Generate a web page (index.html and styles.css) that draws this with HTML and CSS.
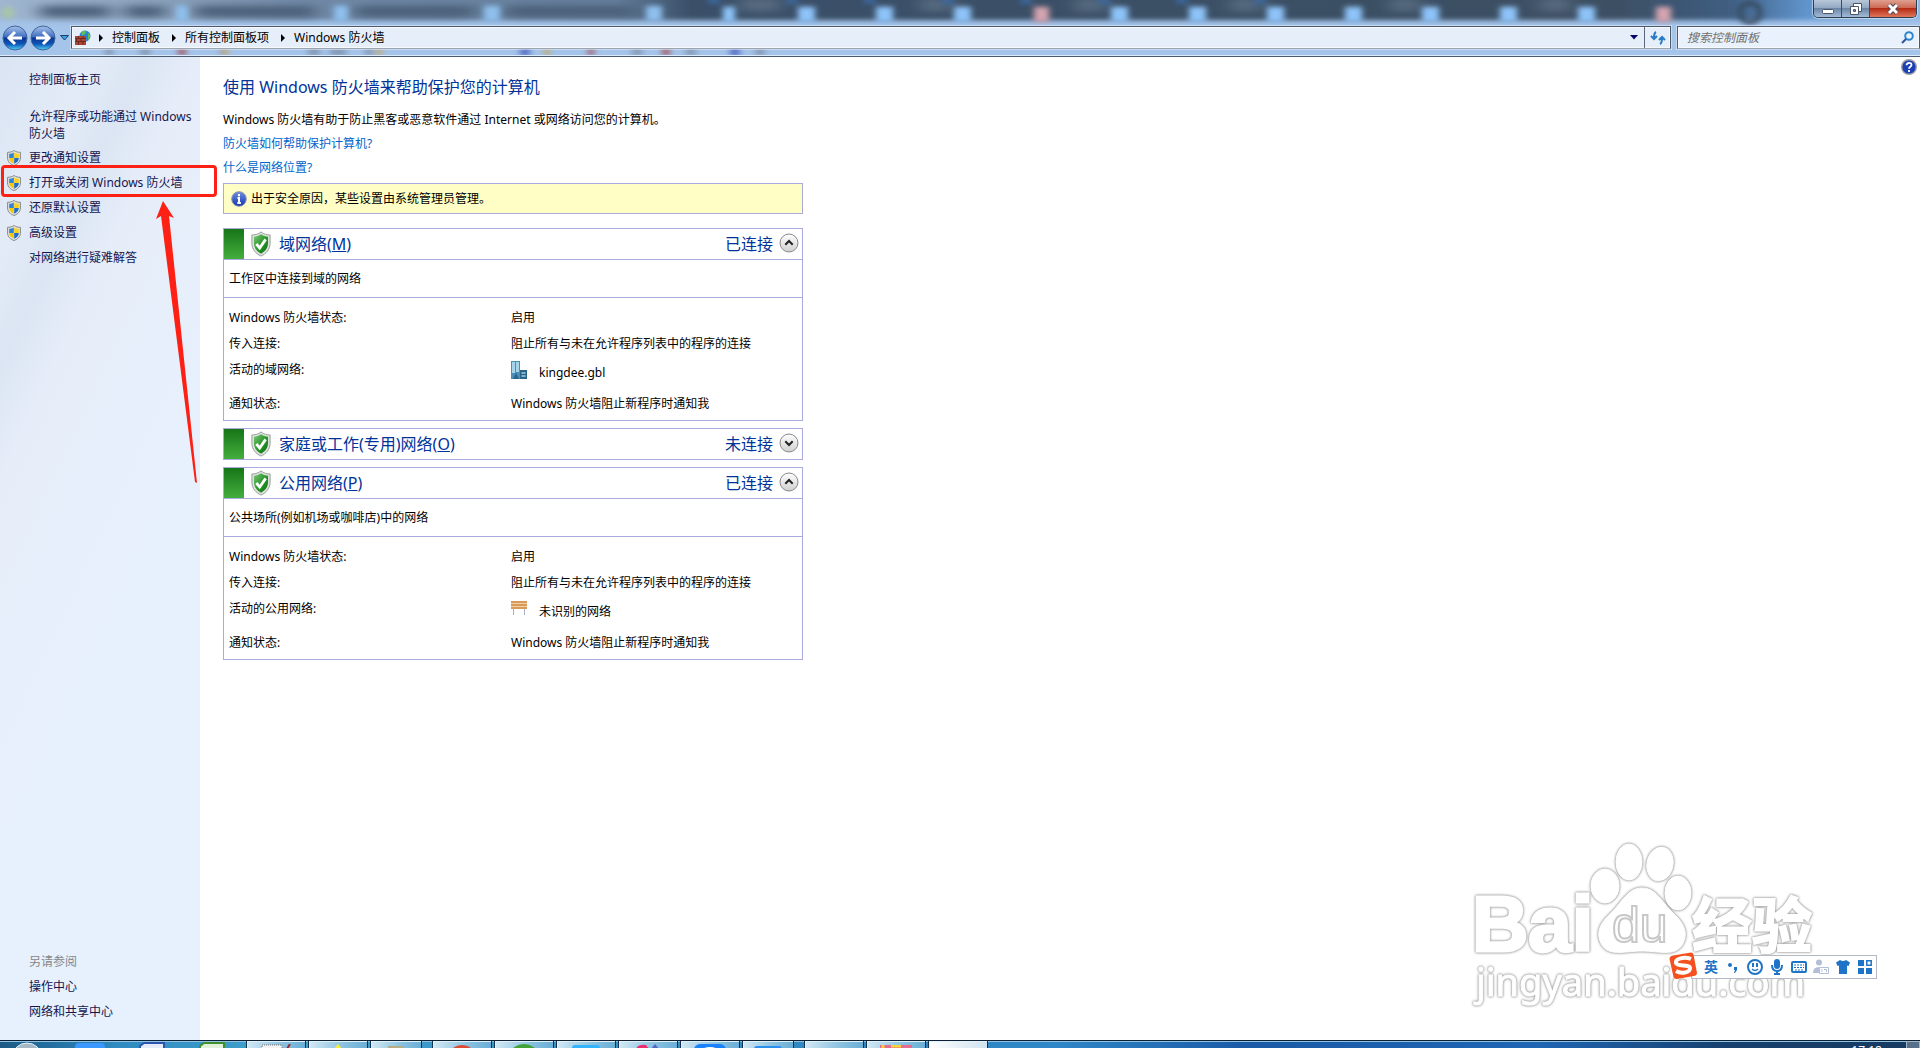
FILE: index.html
```html
<!DOCTYPE html>
<html lang="zh-CN">
<head>
    <meta charset="utf-8">
    <title>Windows 防火墙</title>
    <link rel="stylesheet" href="styles.css">
</head>
<body>
    <!-- shared icons -->
    <svg class="defs" width="0" height="0" aria-hidden="true">
        <defs>
            <linearGradient id="navBlue" x1="0" y1="0" x2="0" y2="1">
                <stop offset="0" stop-color="#a9c3ea"/>
                <stop offset=".45" stop-color="#3f6fc0"/>
                <stop offset=".5" stop-color="#0c3590"/>
                <stop offset=".75" stop-color="#0d56b8"/>
                <stop offset="1" stop-color="#4fd3f7"/>
            </linearGradient>
            <linearGradient id="greenShield" x1="0" y1="0" x2="1" y2="1">
                <stop offset="0" stop-color="#7cc47a"/>
                <stop offset=".5" stop-color="#2c9a2c"/>
                <stop offset="1" stop-color="#0d6e12"/>
            </linearGradient>
            <linearGradient id="chevBg" x1="0" y1="0" x2="0" y2="1">
                <stop offset="0" stop-color="#fff"/>
                <stop offset="1" stop-color="#cfcfcf"/>
            </linearGradient>
            <linearGradient id="infoBlue" x1="0" y1="0" x2="0" y2="1">
                <stop offset="0" stop-color="#6f8fe0"/>
                <stop offset="1" stop-color="#1233b4"/>
            </linearGradient>
        </defs>
        <symbol id="uac" viewBox="0 0 14 16">
            <path d="M7 .5C5 2 3 2.300 .6 2.300V8c0 4 3 6.300 6.400 7.500C10.400 14.300 13.400 12 13.400 8V2.300C11 2.300 9 2 7 .5z" fill="#e4e4e0" stroke="#85878a"/>
            <path d="M6.800 2.500V8H2.200V3.800C4 3.800 5.400 3.400 6.800 2.500z" fill="#2f83d6"/>
            <path d="M7.200 2.500V8h4.600V3.800C10 3.800 8.600 3.400 7.200 2.500z" fill="#f8d21c"/>
            <path d="M6.800 8v5.800C4.200 12.700 2.200 11 2.200 8z" fill="#f5c60c"/>
            <path d="M7.200 8v5.800c2.600-1.100 4.600-2.800 4.600-5.800z" fill="#1f6cc9"/>
        </symbol>
        <symbol id="okShield" viewBox="0 0 22 28">
            <path d="M11 1C8 3.500 4.500 4.300 1.200 4.300V13c0 7 4.300 11.500 9.800 14 5.500-2.500 9.800-7 9.800-14V4.300C17.500 4.300 14 3.500 11 1z" fill="#dfe3df" stroke="#8f9890"/>
            <path d="M11 3.600C8.600 5.300 6 6.100 3.400 6.300V13c0 5.600 3.200 9 7.600 11.400 4.400-2.400 7.600-5.800 7.600-11.400V6.300C16 6.100 13.400 5.300 11 3.600z" fill="url(#greenShield)"/>
            <path d="M6 14l3.600 4.300L16 9" fill="none" stroke="#fff" stroke-width="3"/>
        </symbol>
        <symbol id="up" viewBox="0 0 20 20">
            <circle cx="10" cy="10" r="9" fill="url(#chevBg)" stroke="#8a8a8a"/>
            <path d="M6.300 11.700L10 8l3.700 3.700" fill="none" stroke="#222" stroke-width="2"/>
        </symbol>
        <symbol id="down" viewBox="0 0 20 20">
            <circle cx="10" cy="10" r="9" fill="url(#chevBg)" stroke="#8a8a8a"/>
            <path d="M6.300 8.300L10 12l3.700-3.700" fill="none" stroke="#222" stroke-width="2"/>
        </symbol>
    </svg>

    <header class="frame">
        <svg class="glass" viewBox="0 0 1920 57" preserveAspectRatio="none" aria-hidden="true">
            <defs>
                <filter id="soft" filterUnits="userSpaceOnUse" x="-20" y="-40" width="1960" height="120"><feGaussianBlur stdDeviation="3"/></filter>
                <filter id="softer" filterUnits="userSpaceOnUse" x="-20" y="-40" width="1960" height="120"><feGaussianBlur stdDeviation="9 4"/></filter>
                <linearGradient id="dark" gradientUnits="userSpaceOnUse" x1="0" x2="1920" y1="0" y2="0">
                    <stop offset="0" stop-color="#9fb6d0"/>
                    <stop offset=".08" stop-color="#8ca3bd"/>
                    <stop offset=".16" stop-color="#7089a6"/>
                    <stop offset=".32" stop-color="#647e9b"/>
                    <stop offset=".36" stop-color="#3a4f68"/>
                    <stop offset=".84" stop-color="#3c4f63"/>
                    <stop offset=".9" stop-color="#3f5d80"/>
                    <stop offset=".94" stop-color="#5f93cb"/>
                    <stop offset="1" stop-color="#8fb8e6"/>
                </linearGradient>
            </defs>
            <rect width="1920" height="57" fill="#a4c4ea"/>
            <rect x="-40" y="-14" width="2000" height="35" fill="url(#dark)" filter="url(#soft)"/>
            <g filter="url(#softer)">
                <path d="M40 12h70M125 12h40M195 12h120M355 12h120M505 12h130" stroke="#4b6079" stroke-width="12"/>
                <path d="M740 5h40M920 5h30M1075 5h30M1230 5h30M1390 5h30M1540 5h30" stroke="#566a80" stroke-width="14"/>
            </g>
            <g filter="url(#soft)">
                <path d="M176 14h12M334 14h14M484 14h16M646 14h16" stroke="#8ec0ee" stroke-width="16"/>
                <path d="M723 15h12M798 15h17M876 15h17M954 15h17M1111 15h17M1189 15h17M1267 15h17M1345 15h17M1422 15h17M1500 15h17M1578 15h17" stroke="#8ec4fa" stroke-width="16"/>
                <path d="M1034 15h15M1656 15h15" stroke="#d6a5b0" stroke-width="16"/>
                <path d="M708 1h12M786 1h12M864 1h12M942 1h12M1020 1h12M1098 1h12M1176 1h12M1254 1h12" stroke="#3a6ca5" stroke-width="5"/>
                <circle cx="8" cy="13" r="6" fill="#a7c7a5"/>
                <circle cx="1750" cy="13" r="10" fill="none" stroke="#34485f" stroke-width="5"/>
                <path d="M105 54h8M140 54h10M220 54h8M308 54h12M330 54h16M365 54h8M632 54h10M686 54h10M755 54h10" stroke="#7d8ea8" stroke-width="6"/>
                <path d="M520 54h10M730 54h10" stroke="#4c62c0" stroke-width="7"/>
                <path d="M662 54h8M178 54h8M588 54h6" stroke="#a3464d" stroke-width="6"/>
                <path d="M222 54h6M376 54h6M544 54h6" stroke="#c8a257" stroke-width="6"/>
            </g>
        </svg>

        <div class="window-buttons">
            <button aria-label="最小化"><svg width="14" height="14"><rect x="1.500" y="7.500" width="11" height="4" rx="1" fill="#fff" stroke="#4c5668"/></svg></button>
            <button aria-label="还原"><svg width="14" height="14"><path d="M4.500 1.500h8v8h-8z" fill="#fff" stroke="#4c5668"/><path d="M1.500 4.500h8v8h-8z" fill="#fff" stroke="#4c5668"/><path d="M4.500 7.500h2v2h-2z" fill="#7388a5" stroke="#4c5668"/></svg></button>
            <button class="close" aria-label="关闭"><svg width="14" height="14"><path d="M3 3l8 8M11 3l-8 8" stroke="#4c4c5c" stroke-width="5"/><path d="M3 3l8 8M11 3l-8 8" stroke="#fff" stroke-width="3"/></svg></button>
        </div>

        <div class="nav">
            <div class="travel">
                <button aria-label="后退"><svg width="26" height="26" viewBox="0 0 26 26"><circle cx="13" cy="13" r="12" fill="url(#navBlue)" stroke="#43649c"/><path d="M20 13H8M13 7l-6 6 6 6" fill="none" stroke="#fff" stroke-width="3"/></svg></button>
                <button aria-label="前进"><svg width="26" height="26" viewBox="0 0 26 26"><circle cx="13" cy="13" r="12" fill="url(#navBlue)" stroke="#43649c"/><path d="M6 13h12M13 7l6 6-6 6" fill="none" stroke="#fff" stroke-width="3"/></svg></button>
                <button aria-label="最近的页面"><svg width="10" height="6"><path d="M.5.5h8L4.500 5z" fill="#3d9fe0" stroke="#1c3f74"/></svg></button>
            </div>
            <div class="address">
                <svg width="16" height="16" viewBox="0 0 16 16">
                    <circle cx="10" cy="6" r="5.500" fill="#2b83d8"/>
                    <path d="M6 3c2-3 5-2.500 5-1s-2 2-3 4zM13 3c3 2 2.500 6 0 7z" fill="#5fc24c"/>
                    <path d="M0 6h11v9H0z" fill="#b04533"/>
                    <path d="M0 8.500h11M0 11.500h11M3.500 6v2.500M8 6v2.500M1.500 8.500v3M6 8.500v3M3.500 11.500V15M8 11.500V15" stroke="#6e2a20"/>
                </svg>
                <span class="sep first"></span><a href="#">控制面板</a>
                <span class="sep"></span><a href="#">所有控制面板项</a>
                <span class="sep"></span><a href="#">Windows 防火墙</a>
                <button class="history" aria-label="以前的位置"><svg width="8" height="5"><path d="M0 0h8L4 4.500z" fill="#04046c"/></svg></button>
                <button class="refresh" aria-label="刷新"><svg width="16" height="14" viewBox="0 0 16 14"><path d="M6 1C4 2 4 4 4 7M1 5l3 3 3-3M10 13c2-1 2-3 2-6M9 9l3-3 3 3" fill="none" stroke="#2a7ac8" stroke-width="2"/></svg></button>
            </div>
            <label class="search">
                <input type="text" placeholder="搜索控制面板" aria-label="搜索控制面板">
                <svg width="13" height="13"><circle cx="8" cy="5" r="3.800" fill="#eaf5fd" stroke="#2f86cf" stroke-width="2"/><path d="M5 8l-4 4" stroke="#28549c" stroke-width="2"/></svg>
            </label>
        </div>
    </header>

    <div class="page">
        <nav class="sidebar">
            <a class="home" href="#">控制面板主页</a>
            <a class="wrap" href="#">允许程序或功能通过 Windows 防火墙</a>
            <a href="#"><svg><use href="#uac"/></svg>更改通知设置</a>
            <a class="marked" href="#"><svg><use href="#uac"/></svg>打开或关闭 Windows 防火墙</a>
            <a href="#"><svg><use href="#uac"/></svg>还原默认设置</a>
            <a href="#"><svg><use href="#uac"/></svg>高级设置</a>
            <a href="#">对网络进行疑难解答</a>
            <div class="see-also">
                <span>另请参阅</span>
                <a href="#">操作中心</a>
                <a href="#">网络和共享中心</a>
            </div>
            <svg class="arrow" width="48" height="286" viewBox="0 0 48 286"><path d="M10 1l11 17-5-2 28 267-2-1L8 16l-5 3z" fill="#fd2014"/></svg>
        </nav>

        <main class="content">
            <button class="help" aria-label="帮助"><svg width="16" height="16" viewBox="0 0 16 16"><circle cx="8" cy="8" r="7.300" fill="#1b3fb5" stroke="#9d9da3" stroke-width="1.400"/><path d="M5.600 6.300c0-3.200 4.900-3.200 4.900-.4C10.500 7.800 8 7.600 8 9.700M8 11v2" fill="none" stroke="#fff" stroke-width="1.800"/></svg></button>
            <h1>使用 Windows 防火墙来帮助保护您的计算机</h1>
            <p>Windows 防火墙有助于防止黑客或恶意软件通过 Internet 或网络访问您的计算机。</p>
            <p><a href="#">防火墙如何帮助保护计算机?</a></p>
            <p><a href="#">什么是网络位置?</a></p>

            <div class="notice">
                <svg width="16" height="16" viewBox="0 0 16 16"><circle cx="8" cy="8" r="7.300" fill="url(#infoBlue)" stroke="#8b93ab"/><path d="M8 3v2.300M6.500 7H8v5M6.300 12h3.600" fill="none" stroke="#fff" stroke-width="2"/></svg>
                出于安全原因，某些设置由系统管理员管理。
            </div>

            <section class="network">
                <h2>
                    <svg class="shield"><use href="#okShield"/></svg>
                    <span class="name">域网络(<u>M</u>)</span>
                    <span>已连接</span>
                    <button aria-label="折叠"><svg><use href="#up"/></svg></button>
                </h2>
                <p>工作区中连接到域的网络</p>
                <table>
                    <tr><th>Windows 防火墙状态:</th><td>启用</td></tr>
                    <tr><th>传入连接:</th><td>阻止所有与未在允许程序列表中的程序的连接</td></tr>
                    <tr class="active"><th>活动的域网络:</th><td>
                        <svg width="16" height="18" viewBox="0 0 16 18"><path d="M0 0h9v18H0z" fill="#4a8fb8"/><path d="M1 1h3v11H1zM5 1h3v10H5z" fill="#a5d3ea"/><path d="M9 9h7v9H9z" fill="#2e6387"/><path d="M10.500 11h4v2h-4zM10.500 14h4v2h-4z" fill="#7fb4d1"/><path d="M2 18l3-6 3 6z" fill="#27658c"/></svg>
                        kingdee.gbl</td></tr>
                    <tr><th>通知状态:</th><td>Windows 防火墙阻止新程序时通知我</td></tr>
                </table>
            </section>

            <section class="network">
                <h2>
                    <svg class="shield"><use href="#okShield"/></svg>
                    <span class="name">家庭或工作(专用)网络(<u>O</u>)</span>
                    <span>未连接</span>
                    <button aria-label="展开"><svg><use href="#down"/></svg></button>
                </h2>
            </section>

            <section class="network">
                <h2>
                    <svg class="shield"><use href="#okShield"/></svg>
                    <span class="name">公用网络(<u>P</u>)</span>
                    <span>已连接</span>
                    <button aria-label="折叠"><svg><use href="#up"/></svg></button>
                </h2>
                <p>公共场所(例如机场或咖啡店)中的网络</p>
                <table>
                    <tr><th>Windows 防火墙状态:</th><td>启用</td></tr>
                    <tr><th>传入连接:</th><td>阻止所有与未在允许程序列表中的程序的连接</td></tr>
                    <tr class="active"><th>活动的公用网络:</th><td>
                        <svg width="16" height="18" viewBox="0 0 16 18"><path d="M0 2h16M0 5h16M0 8h16" stroke="#d99b5c" stroke-width="2"/><path d="M0 3.500h16M0 6.500h16" stroke="#f3cfa3"/><path d="M2.500 9v6M13.500 9v6" stroke="#aab0cc"/></svg>
                        未识别的网络</td></tr>
                    <tr><th>通知状态:</th><td>Windows 防火墙阻止新程序时通知我</td></tr>
                </table>
            </section>
        </main>
    </div>

    <svg class="watermark" width="350" height="172" viewBox="0 0 350 172">
        <text class="logo" x="0" y="109">Bai</text>
        <ellipse cx="133" cy="44" rx="14" ry="17"/>
        <ellipse cx="157" cy="20" rx="13" ry="18"/>
        <ellipse cx="188" cy="22" rx="13" ry="17" transform="rotate(12 188 22)"/>
        <ellipse cx="206" cy="51" rx="13" ry="17"/>
        <path d="M170 46c14 0 20 14 30 24 10 9 16 18 12 29-6 17-24 10-42 10s-36 7-42-10c-4-11 2-20 12-29 10-10 16-24 30-24z"/>
        <text class="du" x="140" y="100">du</text>
        <text class="cn" x="220" y="106">经验</text>
        <text class="url" x="4" y="154">jingyan.baidu.com</text>
    </svg>

    <div class="ime">
        <svg class="sogou" width="28" height="28" viewBox="0 0 28 28"><path d="M4 3.500L22 .5q2 0 2.500 2L28 21q0 2-2 2.700L8 27q-3 0-3.500-2L.5 7q0-3 3.500-3.500z" fill="#f4511e"/><path d="M22 7C15 4 6 7 7 11c1 4 14 1 14 5 0 5-9 6-14 3" fill="none" stroke="#fff" stroke-width="4"/></svg>
        <button>英</button>
        <button aria-label="标点"><svg width="12" height="14"><circle cx="3" cy="5" r="2"/><path d="M7 7h3v3l-2 3H7l1-3H7z"/></svg></button>
        <button aria-label="表情"><svg width="16" height="16"><circle cx="8" cy="8" r="7" fill="none" stroke="#1f74c8" stroke-width="2"/><path d="M5 4h2v4H5zM9 4h2v4H9z"/><path d="M5 10q3 3 6 0" fill="none" stroke="#1f74c8" stroke-width="1.500"/></svg></button>
        <button aria-label="语音"><svg width="12" height="16"><rect x="3" width="6" height="10" rx="3"/><path d="M1 6q0 6 5 6t5-6M6 12v3M3 15h6" fill="none" stroke="#1f74c8" stroke-width="2"/></svg></button>
        <button aria-label="软键盘"><svg width="16" height="12"><rect x="1" y="1" width="14" height="10" rx="1" fill="none" stroke="#1f74c8" stroke-width="2"/><path d="M3 4h10M3 6.500h10M4 9h8" stroke="#1f74c8" stroke-dasharray="2 1"/></svg></button>
        <button aria-label="账户"><svg class="dim" width="16" height="16"><circle cx="6" cy="3.500" r="3"/><path d="M0 14q0-6 6-6v6z"/><path d="M6.500 8.500h9v6h-9zM9 10v3M11 10.500h2.500v2.500" fill="none" stroke="#b3bfd8"/></svg></button>
        <button aria-label="皮肤"><svg width="14" height="14"><path d="M4 0q3 2 6 0l4 2.500L12.500 6 11 5.500V14H3V5.500L1.500 6 0 2.500z"/></svg></button>
        <button aria-label="工具箱"><svg width="14" height="14"><path d="M0 0h6v6H0zM0 8h6v6H0zM8 8h6v6H8z"/><path d="M8.800.8h4.400v4.400H8.800z" fill="none" stroke="#1f74c8" stroke-width="1.500"/></svg></button>
    </div>

    <footer class="taskbar">
        <div class="pinned">
            <svg width="28" height="6"><ellipse cx="14" cy="14" rx="14" ry="13" fill="#a6b8c6" stroke="#e8f4fc"/></svg>
            <svg width="30" height="6"><rect y="1" width="30" height="12" rx="4" fill="#3b98ff"/></svg>
            <svg width="26" height="6"><path d="M1 9V4l4-3h20v8z" fill="#e4ecfa" stroke="#2c55b0" stroke-width="2"/></svg>
            <svg width="26" height="6"><path d="M1 9V4l4-3h20v8z" fill="#e2f2da" stroke="#3f8f2f" stroke-width="2"/></svg>
        </div>
        <div class="tasks">
            <button aria-label="记事本"><svg width="32" height="5"><path d="M2 1h20v6H2z" fill="#f4f4f4" stroke="#777" stroke-dasharray="1 1"/><path d="M30 0l-3 5" stroke="#a02828" stroke-width="2"/></svg></button>
            <button aria-label="提示"><svg width="10" height="5"><path d="M5 0l4 5H1z" fill="#f8ee39"/></svg></button>
            <button class="stack" aria-label="文件夹"><svg width="16" height="3"><path d="M0 0h16v3H0z" fill="#b8ae86"/></svg></button>
            <button aria-label="浏览器"><svg width="22" height="4"><ellipse cx="11" cy="6" rx="10" ry="6" fill="#dc4a38"/></svg></button>
            <button aria-label="浏览器"><svg width="26" height="5"><ellipse cx="13" cy="9" rx="13" ry="9" fill="#43a336"/></svg></button>
            <button aria-label="聊天"><svg width="28" height="4"><rect width="28" height="8" rx="3" fill="#32b4ff"/></svg></button>
            <button aria-label="开发工具"><svg width="30" height="5"><path d="M3 5q2-5 10-4l3 4z" fill="#ed2d6e"/><path d="M18 5l4-5 4 5z" fill="#5466cc"/></svg></button>
            <button aria-label="会议"><svg width="32" height="5"><rect width="32" height="12" rx="6" fill="#1a82ff"/><ellipse cx="16" cy="6" rx="8" ry="3" fill="#fff"/></svg></button>
            <button class="stack" aria-label="邮件"><svg width="28" height="3"><rect width="28" height="8" rx="3" fill="#2b8ff0"/></svg></button>
            <button aria-label="窗口"></button>
            <button aria-label="压缩"><svg width="32" height="4"><path d="M0 0h32v4H0z" fill="#e86b91"/><path d="M3 0v4M11 1h10" stroke="#f6d43a" stroke-width="3"/></svg></button>
            <button class="current" aria-label="控制面板"></button>
        </div>
        <time>17:18</time>
        <button class="desktop" aria-label="显示桌面"></button>
    </footer>
</body>
</html>
```
FILE: styles.css
```css
*,
*::before,
*::after {
    box-sizing: border-box;
}
body {
    margin: 0;
    height: 100vh;
    display: flex;
    flex-direction: column;
    overflow: hidden;
    position: relative;
    background: #fff;
    color: #000;
    font: 12px/16px "Noto Sans", "Noto Sans CJK SC", sans-serif;
}
a {
    color: #0066cc;
    text-decoration: none;
}
button {
    margin: 0;
    padding: 0;
    border: 0;
    background: none;
    font: inherit;
    color: inherit;
    display: flex;
    align-items: center;
    justify-content: center;
}
svg {
    flex: none;
    display: block;
}
.defs {
    position: absolute;
}

/* window frame */
.frame {
    position: relative;
    flex: none;
    height: 57px;
    padding-top: 26px;
    border-bottom: 1px solid #4c5a70;
    box-shadow: inset 0 -1px #dcebfb;
}
.glass {
    position: absolute;
    top: 0;
    left: 0;
    width: 100%;
    height: 55px;
}
.window-buttons {
    position: absolute;
    top: 0;
    right: 3px;
    display: flex;
    height: 18px;
    border: 1px solid #2f3d50;
    border-top: 0;
    border-radius: 0 0 5px 5px;
    overflow: hidden;
    box-shadow: 0 0 1px 1px rgba(255, 255, 255, 0.5);
}
.window-buttons button {
    width: 28px;
    border-right: 1px solid #3d4b60;
    background: linear-gradient(#b9c8da, #93a9c3 45%, #6c86a6 50%, #a2bbd8);
}
.window-buttons .close {
    width: 46px;
    border: 0;
    background: linear-gradient(#e0a090, #cc6a55 45%, #b42c14 50%, #e0765c);
}
.nav {
    position: relative;
    display: flex;
    height: 23px;
}
.travel {
    display: flex;
    align-items: center;
    gap: 2px;
    width: 71px;
    padding-left: 2px;
}
.travel button:last-child {
    margin-left: 2px;
}
.address {
    flex: 1;
    display: flex;
    align-items: center;
    padding-left: 3px;
    margin-right: 6px;
    border: 1px solid #4d5868;
    border-bottom-color: #9aa5b0;
    background: #e6eef9;
    box-shadow: inset 0 0 0 1px #f6faff, 0 0 0 1px rgba(255, 255, 255, 0.4);
}
.address a {
    color: #000;
}
.sep {
    border: 4px solid transparent;
    border-left: 4px solid #000;
    border-right: 0;
    margin: 0 9px 0 12px;
}
.sep.first {
    margin-left: 8px;
}
.history {
    margin-left: auto;
    width: 20px;
    height: 21px;
}
.refresh {
    width: 26px;
    height: 21px;
    border-left: 1px solid #5d6878;
}
.search {
    width: 243px;
    display: flex;
    align-items: center;
    padding: 0 5px 0 9px;
    border: 1px solid #4d5868;
    border-bottom-color: #9aa5b0;
    background: #e9f2fc;
    box-shadow: inset 0 0 0 1px #f6faff, 0 0 0 1px rgba(255, 255, 255, 0.4);
}
.search input {
    flex: 1;
    min-width: 0;
    padding: 0;
    border: 0;
    outline: 0;
    background: none;
    font: inherit;
}
.search input::placeholder {
    color: #6e6e6e;
    font-style: italic;
}

/* body of the window */
.page {
    flex: 1;
    min-height: 0;
    display: flex;
}
.sidebar {
    position: relative;
    flex: none;
    width: 200px;
    display: flex;
    flex-direction: column;
    padding: 10px 0 16px;
    background: linear-gradient(115deg, #dae4f3 0, #e3ebf7 14%, #dbe5f3 22%, #e6edf9 30%, #e7f1fd 60%);
}
.sidebar a {
    position: relative;
    display: flex;
    align-items: center;
    height: 25px;
    padding-left: 29px;
    color: #15154f;
}
.sidebar a svg {
    position: absolute;
    left: 7px;
    width: 14px;
    height: 16px;
}
.sidebar .home {
    margin-bottom: 12px;
}
.sidebar .wrap {
    height: 41px;
    line-height: 17px;
}
.marked::after {
    content: "";
    position: absolute;
    left: 1px;
    top: -5px;
    width: 216px;
    height: 32px;
    border: 3px solid #fd2014;
    border-radius: 4px;
    z-index: 2;
}
.see-also {
    margin-top: auto;
}
.see-also span {
    display: block;
    padding-left: 29px;
    line-height: 25px;
    color: #868686;
}
.arrow {
    position: absolute;
    left: 153px;
    top: 143px;
}
.content {
    position: relative;
    flex: 1;
    padding: 18px 23px;
}
.help {
    position: absolute;
    top: 2px;
    right: 3px;
}
h1 {
    margin: 0 0 13px;
    font-size: 16px;
    line-height: 24px;
    font-weight: normal;
    color: #003399;
}
.content > p {
    margin: 0 0 8px;
}
.notice {
    display: flex;
    align-items: center;
    gap: 4px;
    width: 580px;
    height: 31px;
    margin: -1px 0 14px;
    padding-left: 7px;
    border: 1px solid #aaaadc;
    background: #ffffc5;
}
.network {
    width: 580px;
    margin-bottom: 7px;
    border: 1px solid #aaaadc;
}
.network h2 {
    display: flex;
    align-items: center;
    height: 30px;
    margin: 0;
    padding-right: 3px;
    font-size: 16px;
    font-weight: normal;
    color: #003399;
}
.network h2::before {
    content: "";
    width: 20px;
    height: 30px;
    margin-right: 6px;
    background: linear-gradient(#177517, #43ae3e);
}
.network .shield {
    width: 22px;
    height: 26px;
    margin-right: 7px;
}
.network .name {
    flex: 1;
}
.network button {
    margin: 0 0 2px 6px;
}
.network button svg {
    width: 20px;
    height: 20px;
}
.network p {
    margin: 0;
    padding: 1px 0 0 5px;
    border: 1px solid #aaaadc;
    border-width: 1px 0;
    line-height: 36px;
}
.network p + table {
    width: 100%;
    margin: 7px 0 3px;
    border-collapse: collapse;
}
.network th,
.network td {
    height: 26px;
    padding: 0;
    text-align: left;
    font-weight: normal;
}
.network th {
    width: 287px;
    padding-left: 5px;
}
.network .active th {
    height: 34px;
    padding-bottom: 8px;
}
.network .active td {
    display: flex;
    gap: 12px;
    height: 34px;
    padding-top: 4px;
    line-height: 24px;
}

/* overlays in the corner */
.watermark {
    position: absolute;
    right: 98px;
    bottom: 34px;
    fill: #fff;
    stroke: #fff;
    filter: drop-shadow(0 0 1px #999) drop-shadow(0 0 1px #bbb);
}
.watermark .logo {
    font: bold 78px "Liberation Sans", sans-serif;
    stroke-width: 3px;
}
.watermark .du {
    font: 50px "Liberation Sans", sans-serif;
    stroke: #c8c8c8;
    stroke-width: 2px;
}
.watermark .cn {
    font: bold 60px "Noto Sans CJK SC", sans-serif;
    stroke-width: 2px;
}
.watermark .url {
    font: 38px "Noto Sans", sans-serif;
}
.ime {
    position: absolute;
    right: 43px;
    bottom: 69px;
    display: flex;
    height: 24px;
    padding-left: 8px;
    border: 1px solid #b4b9c6;
    background: #fff;
    font-size: 14px;
    font-weight: bold;
    color: #1f74c8;
    fill: #1f74c8;
}
.ime button {
    width: 22px;
}
.ime .dim {
    fill: #b3bfd8;
}
.sogou {
    position: absolute;
    left: -23px;
    top: -4px;
}

/* taskbar, only its top edge is in view */
.taskbar {
    flex: none;
    display: flex;
    height: 8px;
    overflow: hidden;
    border-top: 1px solid #0d2033;
    background: linear-gradient(90deg, #1c5a86, #2e8ac0 6%, #3fa0cc 14%, #2f86c0 45%, #2f86c8 55%, #1a5aa6 65%, #1f66b4 80%, #16406e 90%, #173a60);
    box-shadow: inset 0 1px #8fc4e4;
}
.pinned {
    display: flex;
    align-items: flex-end;
    gap: 34px;
    width: 246px;
    padding-left: 13px;
}
.tasks {
    flex: 1;
    display: flex;
    gap: 2px;
}
.tasks button {
    width: 60px;
    height: 9px;
    border: 1px solid #12314c;
    border-top: 0;
    background: linear-gradient(100deg, #d3e9f5, #8ac2e0 60%, #6aaed6);
    box-shadow: inset 1px 1px #e2f3fc;
    align-items: flex-end;
}
.tasks .stack {
    width: 52px;
    margin-right: 8px;
}
.tasks .current {
    background: linear-gradient(100deg, #fff, #cfe2ee);
}
.taskbar time {
    padding: 2px 24px 0 0;
    color: #fff;
}
.desktop {
    width: 14px;
    height: 8px;
    border: 1px solid #a5b5c5;
    background: #56708c;
}
```
